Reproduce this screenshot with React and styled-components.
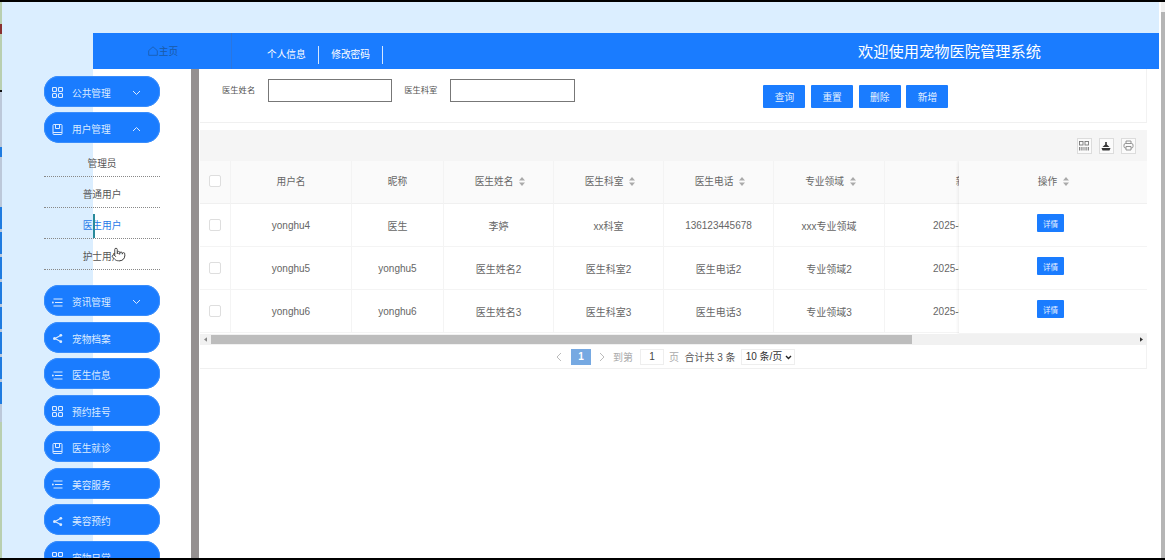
import styled, { createGlobalStyle } from 'styled-components'
import { Pointer } from 'lucide-react'

const GlobalStyle = createGlobalStyle`
  html, body { margin: 0; padding: 0; overflow: hidden; background: #fff; }
  * { box-sizing: border-box; }
  body { font-family: "Liberation Sans", "Noto Sans CJK SC", sans-serif; font-size: 9.7px; color: #666; }
`

// the thin sliver of another window on the left edge: blue blocks with small grey breaks
const edgeBlocks = Array.from({ length: 8 }, (_, i) => {
  const top = 205 + i * 25
  return `#1f7be0 ${top}px, #1f7be0 ${top + 22}px, #bcc8da ${top + 22}px, #bcc8da ${top + 25}px`
}).join(', ')

const Page = styled.div`
  display: flex;
  width: 1165px;
  height: 560px;
  overflow: hidden;
  border-top: 2px solid #000;
  border-bottom: 2px solid #000;
`
const EdgeStrip = styled.div`
  width: 2px;
  flex: none;
  background: linear-gradient(
    to bottom,
    #b9cfb0 0, #b9cfb0 22px, #8a3030 22px, #8a3030 32px, #b9cfb0 32px, #b9cfb0 88px,
    #111 88px, #111 90px, #bcc8da 90px, #bcc8da 145px, #1f7be0 145px, #1f7be0 155px,
    #bcc8da 155px, #bcc8da 205px, ${edgeBlocks}, #bcc8da 405px, #bcc8da 420px,
    #b9cfb0 420px, #b9cfb0 100%
  );
`
const Main = styled.div`
  flex: 1;
  min-width: 0;
  display: flex;
  flex-direction: column;
  padding-top: 31px;
  background: linear-gradient(to right, #dbeeff 0, #dbeeff 1157px, #fff 1157px);
`
const TopBar = styled.header`
  flex: none;
  height: 36px;
  margin: 0 2px 0 91px;
  display: flex;
  align-items: center;
  background: #1a7cff;
  color: #fff;
`
const HomeLink = styled.div`
  width: 139px;
  height: 100%;
  display: flex;
  align-items: center;
  justify-content: center;
  gap: 1px;
  padding: 0 0 1px 2px;
  color: #1a5aa8;
  border-right: 1px solid #2a76e0;
`
const TopNav = styled.nav`
  display: flex;
  align-items: center;
  padding: 7px 0 0 35px;
`
const TopNavItem = styled.a`
  height: 18px;
  line-height: 18px;
  padding-right: 12px;
  margin-right: 12.5px;
  border-right: 1px solid #d5e7ff;
`
const Title = styled.h1`
  margin: 0 118px 0 auto;
  padding-bottom: 2px;
  font-size: 15.25px;
  font-weight: 400;
`
const Body = styled.div`
  flex: 1;
  min-height: 0;
  display: flex;
`
const Sidebar = styled.aside`
  flex: none;
  width: 189px;
  padding: 6.5px 0 0 42px;
  display: flex;
  flex-direction: column;
  gap: 5.5px;
  overflow: hidden;
  background: linear-gradient(to right, #dbeeff 0, #dbeeff 91px, #fff 91px);
`
const Pill = styled.div`
  flex: none;
  width: 116px;
  height: 31px;
  padding: 3px 19px 0 8px;
  display: flex;
  align-items: center;
  gap: 9px;
  border-radius: 15px;
  background: #1a7cff;
  box-shadow: inset 0 0 0 1px #3a8dfb;
  color: #dcebff;
  svg { flex: none; }
`
const Chevron = styled.svg`
  margin-left: auto;
`
const SubMenu = styled.div`
  position: relative;
  flex: none;
  width: 116px;
  margin: -2.5px 0 9.5px;
`
const SubItem = styled.div`
  position: relative;
  height: 31px;
  padding-top: 3px;
  display: flex;
  align-items: center;
  justify-content: center;
  border-bottom: 1px dotted #888;
  color: ${p => (p.$active ? '#1f78e8' : '#555')};
  &::before {
    content: '';
    display: ${p => (p.$active ? 'block' : 'none')};
    position: absolute;
    left: 49px;
    top: 6px;
    width: 1.5px;
    height: 24px;
    background: #2a8a9a;
  }
`
const HandCursor = styled(Pointer)`
  position: absolute;
  left: 67px;
  top: 101px;
  color: #333;
  fill: #fff;
`
const Divider = styled.div`
  flex: none;
  width: 8px;
  background: #959090;
`
const Content = styled.main`
  flex: 1;
  min-width: 0;
  padding: 0 14px 0 1px;
  background: #fff;
`
const SearchForm = styled.form`
  height: 54px;
  margin-bottom: 7px;
  padding: 10px 0 0 22px;
  display: flex;
  align-items: flex-start;
  border-right: 1px solid #f2f2f2;
  border-bottom: 1px solid #f0f0f0;
`
const FieldLabel = styled.label`
  height: 23px;
  line-height: 23px;
  margin-right: 13px;
  font-size: 8.3px;
  color: #555;
`
const FieldInput = styled.input`
  width: ${p => p.$w}px;
  height: 23px;
  margin-right: 12px;
  border: 1px solid #777;
  background: #fff;
  outline: none;
`
const ButtonRow = styled.div`
  display: flex;
  gap: 5.7px;
  margin: 6px 0 0 176px;
`
const ActionButton = styled.button`
  width: 42px;
  height: 23px;
  padding: 0;
  border: none;
  border-radius: 1px;
  background: #1a7cff;
  color: #e6f1ff;
  font: inherit;
`
const Toolbar = styled.div`
  height: 31px;
  padding-right: 11px;
  display: flex;
  align-items: center;
  justify-content: flex-end;
  gap: 6.5px;
  background: #f5f5f5;
`
const ToolButton = styled.div`
  width: 15.5px;
  height: 16px;
  display: flex;
  align-items: center;
  justify-content: center;
  border: 1px solid #dcdcdc;
  background: #fbfbfb;
`
const TableArea = styled.div`
  position: relative;
  height: 173px;
  overflow: hidden;
`
const Grid = styled.table`
  width: 875px;
  table-layout: fixed;
  border-collapse: separate;
  border-spacing: 0;
`
const HeadCell = styled.th`
  height: 43px;
  padding: ${p => (p.$sorted ? '0 0 2px 3px' : '0 0 2px')};
  font-weight: 400;
  text-align: center;
  white-space: nowrap;
  color: #666;
  background: #fafafa;
  border-right: 1px solid #f3f3f3;
  border-bottom: 1px solid #f0f0f0;
`
const Cell = styled.td`
  height: 43px;
  padding: 0;
  font-size: 10px;
  text-align: center;
  white-space: nowrap;
  overflow: hidden;
  color: #666;
  border-right: 1px solid #f4f4f4;
  border-bottom: 1px solid #f4f4f4;
`
const CheckBox = styled.span`
  display: inline-block;
  width: 12px;
  height: 12px;
  vertical-align: middle;
  border: 1px solid #dedede;
  border-radius: 2px;
  background: #fff;
`
const SortMark = styled.svg`
  margin-left: 6px;
  vertical-align: -1px;
`
const FixedColumn = styled.div`
  position: absolute;
  top: 0;
  right: 0;
  width: 188px;
  background: #fff;
  box-shadow: -1px 0 3px rgba(0, 0, 0, 0.07);
`
const FixedHead = styled.div`
  height: 43px;
  padding: 0 0 2px 1px;
  display: flex;
  align-items: center;
  justify-content: center;
  background: #fafafa;
  border-bottom: 1px solid #f0f0f0;
`
const FixedRow = styled.div`
  height: 43px;
  padding: 10px 5px 0 0;
  display: flex;
  justify-content: center;
  border-bottom: 1px solid #f4f4f4;
  &:last-child { height: 44px; }
`
const DetailButton = styled.button`
  width: 27px;
  height: 18px;
  padding: 0;
  border: none;
  border-radius: 1px;
  background: #1a7cff;
  color: #e6f1ff;
  font: inherit;
  font-size: 7.5px;
`
const HScroll = styled.div`
  height: 11px;
  display: flex;
  align-items: center;
  background: #f1f1f1;
`
const ScrollArrow = styled.div`
  flex: none;
  width: 11px;
  display: flex;
  justify-content: center;
`
const ScrollThumb = styled.div`
  width: 701px;
  height: 9px;
  margin-right: auto;
  background: #bdbdbd;
`
const Pager = styled.div`
  height: 24px;
  padding-left: 356px;
  display: flex;
  align-items: center;
  font-size: 10px;
  border-right: 1px solid #f2f2f2;
  border-bottom: 1px solid #f0f0f0;
`
const PagerArrow = styled.svg`
  flex: none;
`
const PagerCurrent = styled.span`
  width: 20px;
  height: 16px;
  margin: 0 8px 0 9px;
  display: flex;
  align-items: center;
  justify-content: center;
  background: #76a9e2;
  color: #fff;
  font-weight: 700;
`
const PagerText = styled.span`
  color: ${p => (p.$dark ? '#555' : '#aaa')};
  margin: ${p => p.$m || '0'};
  white-space: nowrap;
`
const PagerInput = styled.span`
  width: 24px;
  height: 16px;
  margin: 0 5px 0 7px;
  display: flex;
  align-items: center;
  justify-content: center;
  border: 1px solid #eee;
  color: #444;
`
const PageSizeBox = styled.div`
  position: relative;
  width: 54px;
  height: 16px;
  margin-left: 5px;
  svg {
    position: absolute;
    right: 3px;
    top: 6px;
    pointer-events: none;
  }
`
const PageSize = styled.select`
  appearance: none;
  width: 100%;
  height: 100%;
  padding: 0 0 0 4px;
  border: 1px solid #eee;
  border-radius: 0;
  background: #fff;
  color: #333;
  font: inherit;
  outline: none;
`
const VScroll = styled.div`
  flex: none;
  width: 4px;
  display: flex;
  flex-direction: column;
  background: #f1f1f1;
`
const VThumb = styled.div`
  flex: 1;
  margin-top: 10px;
  background: #b5b5b5;
`

const GridIcon = () => (
  <svg width="11" height="11" viewBox="0 0 11 11" fill="none" stroke="#dcebff" strokeWidth="1.1">
    <rect x="0.5" y="0.5" width="4" height="4" rx="1" />
    <rect x="6.5" y="0.5" width="4" height="4" rx="1" />
    <rect x="0.5" y="6.5" width="4" height="4" rx="1" />
    <rect x="6.5" y="6.5" width="4" height="4" rx="1" />
  </svg>
)
const BookIcon = () => (
  <svg width="11" height="11" viewBox="0 0 11 11" fill="none" stroke="#dcebff" strokeWidth="1">
    <rect x="1" y="0.5" width="9" height="10" rx="0.8" />
    <path d="M3.5 0.5V4.5H7.5V0.5M1 8.5H10" />
  </svg>
)
const ListIcon = () => (
  <svg width="11" height="11" viewBox="0 0 11 11" fill="none" stroke="#dcebff" strokeWidth="1.1">
    <path d="M1.5 2H10.5M3 5.5H10.5M1.5 9H10.5" />
    <circle cx="0.9" cy="5.5" r="0.9" fill="#dcebff" stroke="none" />
  </svg>
)
const ShareIcon = () => (
  <svg width="11" height="11" viewBox="0 0 11 11" fill="#dcebff" stroke="#dcebff" strokeWidth="1.1">
    <path d="M8.5 2.5L3 5.5L8.5 8.5" fill="none" />
    <circle cx="2.5" cy="5.5" r="1.5" stroke="none" />
    <circle cx="8.8" cy="2.3" r="1.4" stroke="none" />
    <circle cx="8.8" cy="8.7" r="1.4" stroke="none" />
  </svg>
)
const ChevronIcon = ({ up }) => (
  <Chevron width="9" height="6" viewBox="0 0 9 6" fill="none" stroke="#dcebff" strokeWidth="1">
    <path d={up ? 'M1 5L4.5 1.5L8 5' : 'M1 1L4.5 4.5L8 1'} />
  </Chevron>
)
const Sort = () => (
  <SortMark width="6" height="9" viewBox="0 0 6 9" fill="#aaa">
    <path d="M3 0L6 3.4H0Z" />
    <path d="M3 9L0 5.6H6Z" />
  </SortMark>
)

const columns = [
  { title: '用户名', width: 121 },
  { title: '昵称', width: 92 },
  { title: '医生姓名', width: 110, sort: true },
  { title: '医生科室', width: 110, sort: true },
  { title: '医生电话', width: 110, sort: true },
  { title: '专业领域', width: 111, sort: true },
  { title: '新增时间', width: 190, sort: true },
]

const rows = [
  ['yonghu4', '医生', '李婷', 'xx科室', '136123445678', 'xxx专业领域', '2025-03-01 10:00:00'],
  ['yonghu5', 'yonghu5', '医生姓名2', '医生科室2', '医生电话2', '专业领域2', '2025-03-01 10:00:00'],
  ['yonghu6', 'yonghu6', '医生姓名3', '医生科室3', '医生电话3', '专业领域3', '2025-03-01 10:00:00'],
]

const menuBefore = [
  { label: '公共管理', icon: <GridIcon />, chevron: 'down' },
  { label: '用户管理', icon: <BookIcon />, chevron: 'up' },
]
const menuAfter = [
  { label: '资讯管理', icon: <ListIcon />, chevron: 'down' },
  { label: '宠物档案', icon: <ShareIcon /> },
  { label: '医生信息', icon: <ListIcon /> },
  { label: '预约挂号', icon: <GridIcon /> },
  { label: '医生就诊', icon: <BookIcon /> },
  { label: '美容服务', icon: <ListIcon /> },
  { label: '美容预约', icon: <ShareIcon /> },
  { label: '宠物日常', icon: <GridIcon /> },
]
const subItems = ['管理员', '普通用户', '医生用户', '护士用户']

const MenuPill = ({ item }) => (
  <Pill>
    {item.icon}
    <span>{item.label}</span>
    {item.chevron && <ChevronIcon up={item.chevron === 'up'} />}
  </Pill>
)

export default function App() {
  return (
    <>
      <GlobalStyle />
      <Page>
        <EdgeStrip />
        <Main>
          <TopBar>
            <HomeLink>
              <svg width="10" height="10" viewBox="0 0 10 10" fill="none" stroke="#1a5aa8" strokeWidth="0.8">
                <path d="M0.7 4.6L5 0.8L9.3 4.6V9.3H0.7Z" />
              </svg>
              主页
            </HomeLink>
            <TopNav>
              <TopNavItem>个人信息</TopNavItem>
              <TopNavItem>修改密码</TopNavItem>
            </TopNav>
            <Title>欢迎使用宠物医院管理系统</Title>
          </TopBar>
          <Body>
            <Sidebar>
              {menuBefore.map(item => <MenuPill key={item.label} item={item} />)}
              <SubMenu>
                {subItems.map(name => (
                  <SubItem key={name} $active={name === '医生用户'}>{name}</SubItem>
                ))}
                <HandCursor size={15} strokeWidth={1.4} />
              </SubMenu>
              {menuAfter.map(item => <MenuPill key={item.label} item={item} />)}
            </Sidebar>
            <Divider />
            <Content>
              <SearchForm>
                <FieldLabel>医生姓名</FieldLabel>
                <FieldInput $w={124} />
                <FieldLabel>医生科室</FieldLabel>
                <FieldInput $w={125} />
                <ButtonRow>
                  <ActionButton type="button">查询</ActionButton>
                  <ActionButton type="button">重置</ActionButton>
                  <ActionButton type="button">删除</ActionButton>
                  <ActionButton type="button">新增</ActionButton>
                </ButtonRow>
              </SearchForm>
              <Toolbar>
                <ToolButton>
                  <svg width="10" height="10" viewBox="0 0 10 10" fill="none" stroke="#777" strokeWidth="0.9">
                    <rect x="0.5" y="0.5" width="3.5" height="3.5" />
                    <rect x="6" y="0.5" width="3.5" height="3.5" />
                    <path d="M0.5 6V9.5M2.2 6V9.5M4 6V9.5M6 6V9.5M7.8 6V9.5M9.5 6V9.5" />
                  </svg>
                </ToolButton>
                <ToolButton>
                  <svg width="10" height="10" viewBox="0 0 10 10" fill="#333">
                    <path d="M4.2 1H5.8V3.4L8.5 6H1.5L4.2 3.4Z" />
                    <path d="M0.5 7H9.5L8.5 9.5H1.5Z" />
                  </svg>
                </ToolButton>
                <ToolButton>
                  <svg width="11" height="11" viewBox="0 0 11 11" fill="none" stroke="#888" strokeWidth="0.9">
                    <path d="M3 3.5V1H8V3.5" />
                    <rect x="1" y="3.5" width="9" height="4.5" rx="1.5" />
                    <path d="M3 6.5H8V10H3Z" fill="#fbfbfb" />
                  </svg>
                </ToolButton>
              </Toolbar>
              <TableArea>
                <Grid>
                  <colgroup>
                    <col width="31" />
                    {columns.map(c => <col key={c.title} width={c.width} />)}
                  </colgroup>
                  <thead>
                    <tr>
                      <HeadCell><CheckBox /></HeadCell>
                      {columns.map(c => (
                        <HeadCell key={c.title} $sorted={c.sort}>{c.title}{c.sort && <Sort />}</HeadCell>
                      ))}
                    </tr>
                  </thead>
                  <tbody>
                    {rows.map(row => (
                      <tr key={row[0]}>
                        <Cell><CheckBox /></Cell>
                        {row.map((value, i) => <Cell key={i}>{value}</Cell>)}
                      </tr>
                    ))}
                  </tbody>
                </Grid>
                <FixedColumn>
                  <FixedHead>操作<Sort /></FixedHead>
                  {rows.map(row => (
                    <FixedRow key={row[0]}>
                      <DetailButton type="button">详情</DetailButton>
                    </FixedRow>
                  ))}
                </FixedColumn>
              </TableArea>
              <HScroll>
                <ScrollArrow>
                  <svg width="3" height="5" viewBox="0 0 4 6" fill="#888"><path d="M4 0V6L0 3Z" /></svg>
                </ScrollArrow>
                <ScrollThumb />
                <ScrollArrow>
                  <svg width="3" height="5" viewBox="0 0 4 6" fill="#333"><path d="M0 0V6L4 3Z" /></svg>
                </ScrollArrow>
              </HScroll>
              <Pager>
                <PagerArrow width="6" height="10" viewBox="0 0 6 10" fill="none" stroke="#bbb">
                  <path d="M5 1L1 5L5 9" />
                </PagerArrow>
                <PagerCurrent>1</PagerCurrent>
                <PagerArrow width="6" height="10" viewBox="0 0 6 10" fill="none" stroke="#bbb">
                  <path d="M1 1L5 5L1 9" />
                </PagerArrow>
                <PagerText $m="0 0 0 8px">到第</PagerText>
                <PagerInput>1</PagerInput>
                <PagerText>页</PagerText>
                <PagerText $dark $m="0 0 0 5.5px">合计共 3 条</PagerText>
                <PageSizeBox>
                  <PageSize defaultValue="10">
                    <option value="10">10 条/页</option>
                    <option value="20">20 条/页</option>
                  </PageSize>
                  <svg width="7" height="5" viewBox="0 0 7 5" fill="none" stroke="#222" strokeWidth="1.4">
                    <path d="M1 1L3.5 3.5L6 1" />
                  </svg>
                </PageSizeBox>
              </Pager>
            </Content>
          </Body>
        </Main>
        <VScroll><VThumb /></VScroll>
      </Page>
    </>
  )
}
